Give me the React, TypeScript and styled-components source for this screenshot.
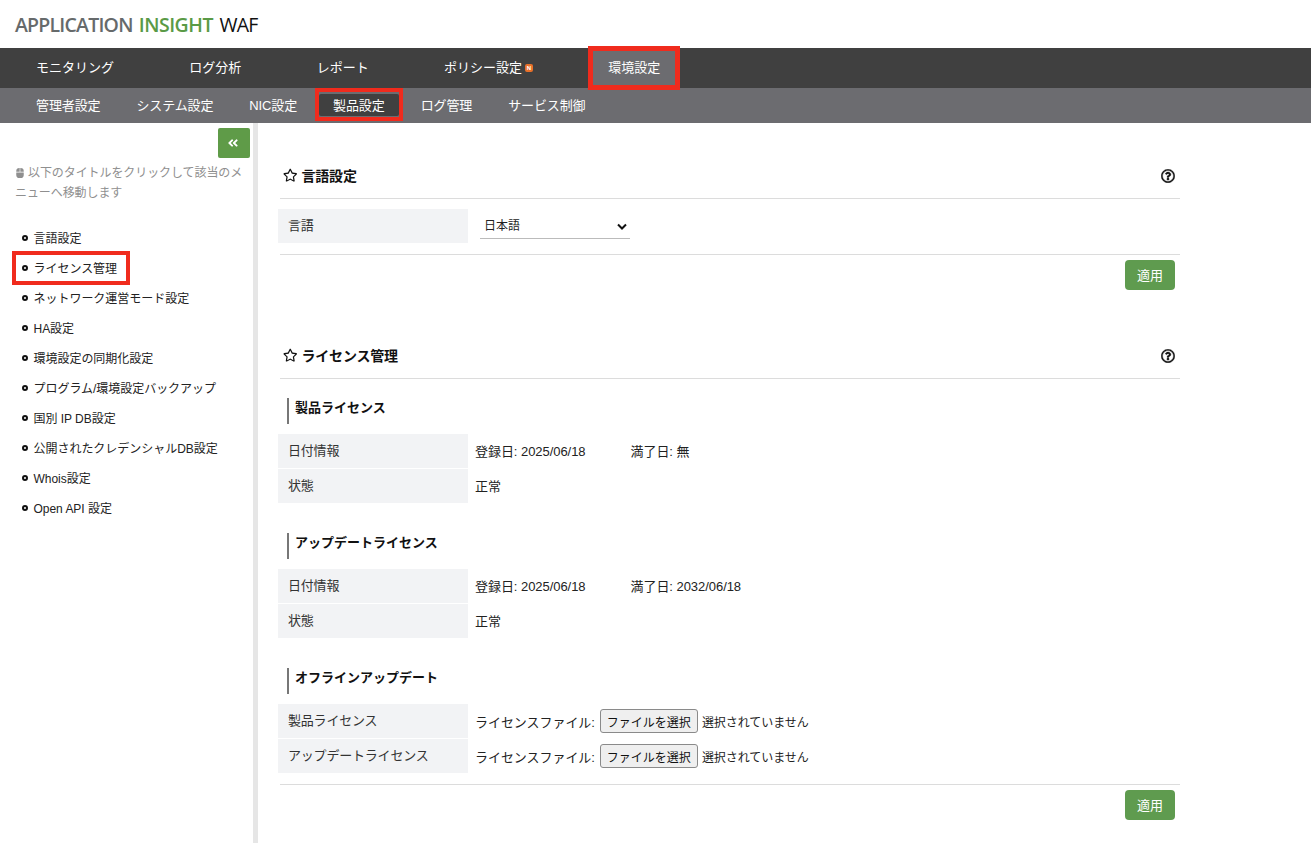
import React from "react";
import styled, { createGlobalStyle, css } from "styled-components";
import { FaAngleDoubleLeft, FaMouse, FaRegStar, FaRegQuestionCircle } from "react-icons/fa";

const Global = createGlobalStyle`
  html, body { margin: 0; padding: 0; background: #fff; }
  body { font-family: "Liberation Sans", "Noto Sans CJK JP", sans-serif; color: #111; }
  * { box-sizing: border-box; }
`;

const Page = styled.div`
  height: 100vh;
  display: flex;
  flex-direction: column;
  overflow: hidden;
`;
const Brand = styled.header`
  height: 48px;
  display: flex;
  align-items: center;
  padding: 0 0 0 15px;
  font-family: "Open Sans", sans-serif;
  font-size: 19.5px;
  white-space: pre;
`;
const BrandPart = styled.span<{ $c: string; $w?: number; $gap?: number; $ls?: number }>`
  color: ${(p) => p.$c};
  font-weight: ${(p) => p.$w ?? 600};
  margin-left: ${(p) => p.$gap ?? 0}px;
  letter-spacing: ${(p) => p.$ls ?? 0}px;
`;

const annotation = (t: number, r: number, b: number, l: number, w: number) => css`
  &::after {
    content: "";
    position: absolute;
    top: ${t}px;
    right: ${r}px;
    bottom: ${b}px;
    left: ${l}px;
    border: ${w}px solid #f02b1d;
    pointer-events: none;
    z-index: 2;
  }
`;

const MainNav = styled.nav`
  height: 40px;
  background: #404040;
  display: flex;
  padding-left: 21px;
  gap: 45.3px;
`;
const MainItem = styled.a<{ $active?: boolean }>`
  position: relative;
  display: flex;
  align-items: center;
  padding: 0 15px 3px;
  color: #fff;
  font-size: 13px;
  ${(p) => p.$active && css`background: #6c6c70; ${annotation(-2, -5, -2, -5, 5)}`}
`;
const NewBadge = styled.span`
  display: inline-flex;
  align-items: center;
  justify-content: center;
  width: 8px;
  height: 8px;
  margin: 3px 0 0 3px;
  border-radius: 2px;
  background: #e8702a;
  color: #fff;
  font-size: 6px;
  font-weight: 700;
  line-height: 1;
`;
const SubNav = styled.nav`
  height: 35px;
  background: #6c6c70;
  display: flex;
  padding-left: 18px;
`;
const SubItem = styled.a<{ $active?: boolean }>`
  position: relative;
  height: 22px;
  margin: 6px 4px 7px;
  padding: 0 14px 2px;
  display: flex;
  align-items: center;
  border-radius: 2px;
  color: #fff;
  font-size: 13px;
  letter-spacing: -0.12px;
  ${(p) => p.$active && css`background: #404040; ${annotation(-6, -4, -5, -4, 4)}`}
`;

const Body = styled.div`
  flex: 1;
  display: flex;
  min-height: 0;
`;
const Sidebar = styled.aside`
  width: 258px;
  flex: none;
  border-right: 5px solid #e6e6e6;
  padding-top: 5px;
`;
const CollapseBar = styled.div`
  display: flex;
  justify-content: flex-end;
  padding-right: 3px;
`;
const CollapseButton = styled.button`
  width: 32px;
  height: 30px;
  padding: 0 2px 1px 0;
  border: 0;
  border-radius: 2px;
  background: #5f9b48;
  color: #fff;
  display: flex;
  align-items: center;
  justify-content: center;
  font-size: 12px;
`;
const Hint = styled.p`
  margin: 5px 0 20px;
  padding: 0 8px 0 15px;
  font-size: 12px;
  line-height: 20px;
  letter-spacing: -0.08px;
  color: #8f8f8f;
  svg { font-size: 10px; vertical-align: -1px; margin-right: 3px; }
`;
const TocList = styled.ul`
  list-style: none;
  margin: 0;
  padding: 0 0 0 22px;
`;
const TocRow = styled.li`
  height: 30px;
  display: flex;
  align-items: center;
`;
const TocLink = styled.a<{ $marked?: boolean }>`
  position: relative;
  height: 30px;
  padding-bottom: 2px;
  display: inline-flex;
  align-items: center;
  gap: 6px;
  font-size: 12px;
  letter-spacing: -0.03px;
  color: #222;
  ${(p) => p.$marked && annotation(-2, -13, -2, -10, 4)}
`;
const Ring = styled.i`
  width: 6px;
  height: 6px;
  margin: 2px -0.5px 0 0;
  border: 2px solid #111;
  border-radius: 50%;
`;

const Main = styled.main`
  flex: 1;
  padding: 36px 131px 0 20px;
`;
const Section = styled.section`
  & + & { margin-top: 49px; }
`;
const SectionHead = styled.div`
  height: 40px;
  margin-left: 2px;
  padding: 0 5px 0 3px;
  border-bottom: 1px solid #dcdcdc;
  display: flex;
  align-items: flex-start;
  justify-content: space-between;
`;
const SectionTitle = styled.h2`
  margin: 0;
  height: 34px;
  padding-bottom: 2px;
  display: flex;
  align-items: center;
  gap: 4px;
  font-size: 14px;
  letter-spacing: -0.2px;
  font-weight: 700;
  color: #111;
  svg { font-size: 14.5px; margin-top: 1px; }
`;
const Help = styled.span`
  height: 34px;
  display: flex;
  align-items: center;
  font-size: 14px;
  color: #111;
  svg { stroke: currentColor; stroke-width: 14; }
`;
const SubBlock = styled.div<{ $first?: boolean }>`
  margin-top: ${(p) => (p.$first ? 19 : 30)}px;
`;
const SubHeading = styled.h3`
  margin: 0 0 10px 9px;
  height: 26px;
  padding-left: 6px;
  border-left: 2px solid #777;
  font-size: 13px;
  line-height: 19px;
  font-weight: 700;
  color: #111;
`;
const Rows = styled.div<{ $top?: number }>`
  margin-top: ${(p) => p.$top ?? 0}px;
  display: flex;
  flex-direction: column;
  gap: 1px;
`;
const Row = styled.div`
  height: 34px;
  display: flex;
`;
const Label = styled.div`
  width: 190px;
  flex: none;
  background: #f2f3f5;
  padding: 0 0 4px 10px;
  display: flex;
  align-items: center;
  font-size: 13px;
  letter-spacing: -0.2px;
  color: #333;
`;
const Value = styled.div`
  flex: 1;
  padding: 0 0 2px 7px;
  display: flex;
  align-items: center;
  font-size: 13px;
  letter-spacing: -0.05px;
  color: #222;
`;
const FileValue = styled(Value)`
  padding-bottom: 0;
`;
const DateText = styled.span`
  width: 155.5px;
`;
const SelectWrap = styled.div`
  position: relative;
  width: 150px;
  margin-left: 5px;
  svg { position: absolute; right: 3px; top: 11px; pointer-events: none; }
`;
const NativeSelect = styled.select`
  appearance: none;
  width: 100%;
  height: 27px;
  padding: 2px 0 0 4px;
  border: 0;
  border-bottom: 1px solid #bbb;
  border-radius: 0;
  background: transparent;
  font: inherit;
  font-size: 12px;
  color: #222;
`;
const FileButton = styled.button`
  height: 24px;
  margin: 0 4px 0 5px;
  padding: 0 6px;
  border: 1px solid #8a8a8a;
  border-radius: 3px;
  background: #efefef;
  font: inherit;
  font-size: 12px;
  color: #111;
`;
const EmptyNote = styled.span`
  font-size: 12px;
`;
const Footer = styled.div`
  margin: 11px 0 0 2px;
  padding: 5px 5px 0 0;
  border-top: 1px solid #dcdcdc;
  display: flex;
  justify-content: flex-end;
`;
const ApplyButton = styled.button`
  width: 50px;
  height: 30px;
  padding: 0 0 2px;
  border: 0;
  border-radius: 4px;
  background: #5f9b4f;
  color: #fff;
  font: inherit;
  font-size: 13px;
`;

const mainItems = ["モニタリング", "ログ分析", "レポート"];
const subItems = ["管理者設定", "システム設定", "NIC設定", "製品設定", "ログ管理", "サービス制御"];
const toc = [
  "言語設定",
  "ライセンス管理",
  "ネットワーク運営モード設定",
  "HA設定",
  "環境設定の同期化設定",
  "プログラム/環境設定バックアップ",
  "国別 IP DB設定",
  "公開されたクレデンシャルDB設定",
  "Whois設定",
  "Open API 設定",
];

const Chevron = () => (
  <svg width="10" height="8" viewBox="0 0 10 8" fill="none" stroke="#111" strokeWidth="2">
    <path d="M1 1.5 L5 5.5 L9 1.5" />
  </svg>
);

const Head = ({ title }: { title: string }) => (
  <SectionHead>
    <SectionTitle>
      <FaRegStar />
      {title}
    </SectionTitle>
    <Help>
      <FaRegQuestionCircle />
    </Help>
  </SectionHead>
);

const LicenseBlock = ({ title, expiry, first }: { title: string; expiry: string; first?: boolean }) => (
  <SubBlock $first={first}>
    <SubHeading>{title}</SubHeading>
    <Rows>
      <Row>
        <Label>日付情報</Label>
        <Value>
          <DateText>登録日: 2025/06/18</DateText>
          満了日: {expiry}
        </Value>
      </Row>
      <Row>
        <Label>状態</Label>
        <Value>正常</Value>
      </Row>
    </Rows>
  </SubBlock>
);

const FileRow = ({ label }: { label: string }) => (
  <Row>
    <Label>{label}</Label>
    <FileValue>
      ライセンスファイル:
      <FileButton type="button">ファイルを選択</FileButton>
      <EmptyNote>選択されていません</EmptyNote>
    </FileValue>
  </Row>
);

export default function App() {
  return (
    <Page>
      <Global />
      <Brand>
        <BrandPart $c="#666a6b" $ls={-0.78}>APPLICATION</BrandPart>
        <BrandPart $c="#5a9a46" $gap={6} $ls={-0.5}>INSIGHT</BrandPart>
        <BrandPart $c="#111" $w={400} $gap={6.5} $ls={-0.7}>WAF</BrandPart>
      </Brand>
      <MainNav>
        {mainItems.map((m) => (
          <MainItem key={m}>{m}</MainItem>
        ))}
        <MainItem>
          ポリシー設定
          <NewBadge>N</NewBadge>
        </MainItem>
        <MainItem $active>環境設定</MainItem>
      </MainNav>
      <SubNav>
        {subItems.map((s) => (
          <SubItem key={s} $active={s === "製品設定"}>
            {s}
          </SubItem>
        ))}
      </SubNav>
      <Body>
        <Sidebar>
          <CollapseBar>
            <CollapseButton type="button" aria-label="折りたたむ">
              <FaAngleDoubleLeft />
            </CollapseButton>
          </CollapseBar>
          <Hint>
            <FaMouse />
            以下のタイトルをクリックして該当のメニューへ移動します
          </Hint>
          <TocList>
            {toc.map((t) => (
              <TocRow key={t}>
                <TocLink $marked={t === "ライセンス管理"}>
                  <Ring />
                  {t}
                </TocLink>
              </TocRow>
            ))}
          </TocList>
        </Sidebar>
        <Main>
          <Section>
            <Head title="言語設定" />
            <Rows $top={10}>
              <Row>
                <Label>言語</Label>
                <Value>
                  <SelectWrap>
                    <NativeSelect defaultValue="ja">
                      <option value="ja">日本語</option>
                    </NativeSelect>
                    <Chevron />
                  </SelectWrap>
                </Value>
              </Row>
            </Rows>
            <Footer>
              <ApplyButton type="button">適用</ApplyButton>
            </Footer>
          </Section>
          <Section>
            <Head title="ライセンス管理" />
            <LicenseBlock first title="製品ライセンス" expiry="無" />
            <LicenseBlock title="アップデートライセンス" expiry="2032/06/18" />
            <SubBlock>
              <SubHeading>オフラインアップデート</SubHeading>
              <Rows>
                <FileRow label="製品ライセンス" />
                <FileRow label="アップデートライセンス" />
              </Rows>
            </SubBlock>
            <Footer>
              <ApplyButton type="button">適用</ApplyButton>
            </Footer>
          </Section>
        </Main>
      </Body>
    </Page>
  );
}
